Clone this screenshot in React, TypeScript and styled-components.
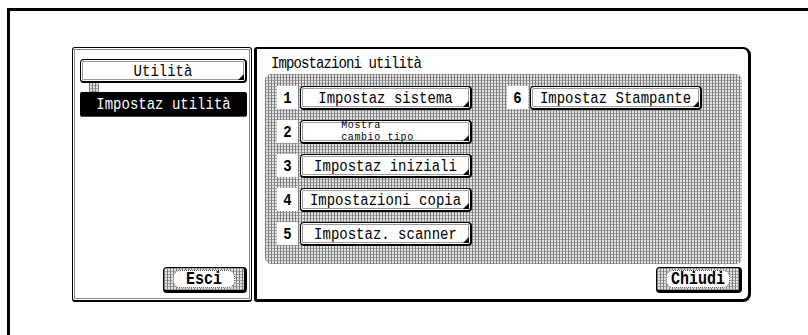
import React from "react";
import styled, { createGlobalStyle } from "styled-components";

const GlobalStyle = createGlobalStyle`
  html, body {
    margin: 0;
    padding: 0;
    background: #fff;
    overflow: hidden;
  }
  body {
    font-family: "Liberation Mono", "DejaVu Sans Mono", monospace;
    color: #000;
  }
`;

const hatch = `
  background-color: #e2e2e2;
  background-image:
    repeating-linear-gradient(90deg, #7e7e7e 0 1px, transparent 1px 3px),
    repeating-linear-gradient(0deg, #a4a4a4 0 1px, transparent 1px 3px);
`;

const Frame = styled.div`
  margin: 8px 0 0 7px;
  height: 327px;
  box-sizing: border-box;
  border-top: 3px solid #000;
  border-left: 3px solid #000;
  padding: 36px 0 0 62px;
  display: flex;
  gap: 2px;
`;

const LeftPanel = styled.div`
  width: 180px;
  height: 255px;
  box-sizing: border-box;
  border: 1px solid #000;
  border-bottom-width: 2px;
  border-radius: 3px;
  box-shadow: inset 0 0 0 1px #fff, inset 0 0 0 2px #8a8a8a;
  padding: 11px 4px 7px 7px;
  display: flex;
  flex-direction: column;
`;

// the panel's bitmap font is tall and narrow
const Label = styled.span<{ $tight?: boolean }>`
  display: inline-block;
  transform: scaleY(1.22);
  letter-spacing: ${(p) => (p.$tight ? "-0.9px" : "0")};
`;

const MenuButton = styled.div<{ $width?: number }>`
  position: relative;
  width: ${(p) => p.$width ?? 172}px;
  height: 24px;
  box-sizing: border-box;
  background: #fff;
  border: 1px solid #000;
  border-right-width: 2px;
  border-bottom-width: 2px;
  border-radius: 4px;
  box-shadow: inset 0 0 0 1px #fff, inset 0 0 0 2px #9a9a9a;
  display: flex;
  align-items: center;
  justify-content: center;
  font-size: 14px;
  line-height: 1;
  white-space: nowrap;
  &::after {
    content: "";
    position: absolute;
    right: 1px;
    bottom: 1px;
    width: 0;
    height: 0;
    border-left: 6px solid transparent;
    border-bottom: 6px solid #000;
  }
`;

const Connector = styled.div`
  width: 10px;
  height: 9px;
  margin-left: 9px;
  ${hatch}
`;

const SelectedItem = styled.div`
  width: 167px;
  height: 25px;
  box-sizing: border-box;
  background: #000;
  color: #fff;
  border-bottom: 1px dotted #999;
  border-radius: 2px;
  display: flex;
  align-items: center;
  justify-content: center;
  font-size: 14px;
`;

const Spacer = styled.div`
  flex: 1;
`;

const EndButton = styled.div<{ $width: number }>`
  align-self: flex-end;
  width: ${(p) => p.$width}px;
  height: 26px;
  box-sizing: border-box;
  border: 1px solid #000;
  border-right-width: 3px;
  border-bottom-width: 3px;
  border-radius: 4px;
  padding: 2px 9px;
  ${hatch}
  display: flex;
`;

const EndLabel = styled.span`
  flex: 1;
  background: #fff;
  border: 1px dotted #555;
  border-radius: 7px;
  display: flex;
  align-items: center;
  justify-content: center;
  font-size: 15px;
  font-weight: bold;
`;

const RightPanel = styled.div`
  width: 497px;
  height: 255px;
  box-sizing: border-box;
  border: 3px solid #000;
  border-top-width: 2px;
  border-radius: 3px 8px 8px 3px;
  padding: 3px 6px 6px 8px;
  display: flex;
  flex-direction: column;
`;

const Title = styled.div`
  height: 22px;
  display: flex;
  align-items: center;
  font-size: 14px;
  padding-left: 6px;
`;

const Hatched = styled.div`
  height: 190px;
  border-radius: 6px;
  ${hatch}
  padding: 12px 0 0 12px;
  box-sizing: border-box;
  display: flex;
  gap: 35px;
  margin-bottom: 3px;
`;

const Column = styled.div`
  display: flex;
  flex-direction: column;
  gap: 10px;
`;

const Row = styled.div`
  display: flex;
  gap: 2px;
  height: 24px;
`;

const Num = styled.div`
  width: 21px;
  height: 23px;
  background: #fff;
  display: flex;
  align-items: center;
  justify-content: center;
  font-size: 14px;
  font-weight: bold;
`;

const SmallText = styled.div`
  font-size: 10px;
  line-height: 11.5px;
  letter-spacing: 0.6px;
  margin-right: 16px;
`;

const items: { n: number; label: React.ReactNode }[] = [
  { n: 1, label: <Label>Impostaz sistema</Label> },
  {
    n: 2,
    label: (
      <SmallText>
        Mostra
        <br />
        cambio tipo
      </SmallText>
    ),
  },
  { n: 3, label: <Label>Impostaz iniziali</Label> },
  { n: 4, label: <Label>Impostazioni copia</Label> },
  { n: 5, label: <Label>Impostaz. scanner</Label> },
];

export default function App() {
  return (
    <>
      <GlobalStyle />
      <Frame>
        <LeftPanel>
          <MenuButton $width={167}>
            <Label>Utilità</Label>
          </MenuButton>
          <Connector />
          <SelectedItem>
            <Label>Impostaz utilità</Label>
          </SelectedItem>
          <Spacer />
          <EndButton $width={84}>
            <EndLabel>
              <Label>Esci</Label>
            </EndLabel>
          </EndButton>
        </LeftPanel>
        <RightPanel>
          <Title>
            <Label $tight>Impostazioni utilità</Label>
          </Title>
          <Hatched>
            <Column>
              {items.map((it) => (
                <Row key={it.n}>
                  <Num>
                    <Label>{it.n}</Label>
                  </Num>
                  <MenuButton>{it.label}</MenuButton>
                </Row>
              ))}
            </Column>
            <Column>
              <Row>
                <Num>
                  <Label>6</Label>
                </Num>
                <MenuButton>
                  <Label>Impostaz Stampante</Label>
                </MenuButton>
              </Row>
            </Column>
          </Hatched>
          <EndButton $width={86}>
            <EndLabel>
              <Label>Chiudi</Label>
            </EndLabel>
          </EndButton>
        </RightPanel>
      </Frame>
    </>
  );
}
